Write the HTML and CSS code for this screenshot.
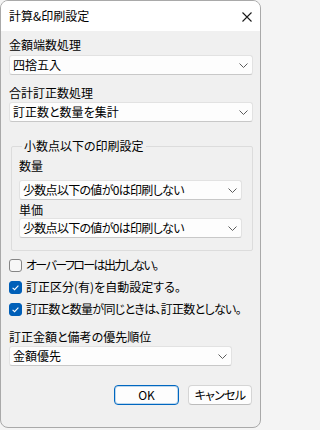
FILE: index.html
```html
<!DOCTYPE html>
<html lang="ja">
<head>
<meta charset="utf-8">
<title>計算&amp;印刷設定</title>
<link rel="stylesheet" href="styles.css">
</head>
<body>
<div class="dialog">
  <div class="titlebar">
    <span class="title">計算&amp;印刷設定</span>
    <svg class="close" width="10" height="10" viewBox="0 0 10 10"><path d="M0.5 0.5 L9.5 9.5 M9.5 0.5 L0.5 9.5" stroke="#1a1a1a" stroke-width="1.1" fill="none"/></svg>
  </div>
  <div class="content">
    <div class="label lab-first">金額端数処理</div>
    <div class="select sel-a">
      <span>四捨五入</span>
      <svg class="chev" width="9" height="5" viewBox="0 0 9 5"><path d="M0.5 0.5 L4.5 4.5 L8.5 0.5" stroke="#5c5c5c" stroke-width="1" fill="none"/></svg>
    </div>
    <div class="label lab-second">合計訂正数処理</div>
    <div class="select sel-b">
      <span>訂正数と数量を集計</span>
      <svg class="chev" width="9" height="5" viewBox="0 0 9 5"><path d="M0.5 0.5 L4.5 4.5 L8.5 0.5" stroke="#5c5c5c" stroke-width="1" fill="none"/></svg>
    </div>
    <fieldset class="group">
      <legend>小数点以下の印刷設定</legend>
      <div class="label lab-qty">数量</div>
      <div class="select sel-qty">
        <span class="narrow">少数点以下の値が0は印刷しない</span>
        <svg class="chev" width="9" height="5" viewBox="0 0 9 5"><path d="M0.5 0.5 L4.5 4.5 L8.5 0.5" stroke="#5c5c5c" stroke-width="1" fill="none"/></svg>
      </div>
      <div class="label lab-price">単価</div>
      <div class="select sel-price">
        <span class="narrow">少数点以下の値が0は印刷しない</span>
        <svg class="chev" width="9" height="5" viewBox="0 0 9 5"><path d="M0.5 0.5 L4.5 4.5 L8.5 0.5" stroke="#5c5c5c" stroke-width="1" fill="none"/></svg>
      </div>
    </fieldset>
    <div class="checks">
      <div class="check">
        <span class="box"></span>
        <span class="kana">オーバーフローは出力しない。</span>
      </div>
      <div class="check">
        <span class="box on"><svg width="13" height="13" viewBox="0 0 13 13"><path d="M3.6 6.8 L5.6 8.7 L9.4 4.6" stroke="#fff" stroke-width="1.1" fill="none"/></svg></span>
        <span>訂正区分(有)を自動設定する。</span>
      </div>
      <div class="check">
        <span class="box on"><svg width="13" height="13" viewBox="0 0 13 13"><path d="M3.6 6.8 L5.6 8.7 L9.4 4.6" stroke="#fff" stroke-width="1.1" fill="none"/></svg></span>
        <span class="tight">訂正数と数量が同じときは、訂正数としない。</span>
      </div>
    </div>
    <div class="label lab-third">訂正金額と備考の優先順位</div>
    <div class="select sel-c">
      <span>金額優先</span>
      <svg class="chev" width="9" height="5" viewBox="0 0 9 5"><path d="M0.5 0.5 L4.5 4.5 L8.5 0.5" stroke="#5c5c5c" stroke-width="1" fill="none"/></svg>
    </div>
    <div class="buttons">
      <div class="btn btn-ok">OK</div>
      <div class="btn btn-cancel"><span class="narrow">キャンセル</span></div>
    </div>
  </div>
</div>
</body>
</html>
```

FILE: styles.css
```css
html, body {
  margin: 0;
  padding: 0;
}
body {
  background: #f4f4f4;
  width: 262px;
  height: 430px;
  font-family: "Noto Sans CJK JP", "Noto Sans", sans-serif;
  font-size: 12px;
  line-height: 16px;
  color: #000;
  font-feature-settings: "palt";
}
.dialog {
  box-sizing: border-box;
  width: 261px;
  height: 428px;
  border: 1px solid #a9a9a9;
  border-radius: 8px;
  overflow: hidden;
  background: #f0f0f0;
  display: flex;
  flex-direction: column;
}
.titlebar {
  height: 30px;
  background: #ffffff;
  display: flex;
  align-items: center;
  justify-content: space-between;
  padding: 0 8px 0 8px;
  flex: none;
}
.title {
  color: #000;
}
.close {
  margin-right: 0;
  margin-top: 1px;
}
.content {
  display: flex;
  flex-direction: column;
  padding: 6px 7px 0 8px;
}
.label {
  height: 16px;
  white-space: nowrap;
}
.lab-second { margin-top: 10px; }
.lab-qty { margin-top: 0; }
.lab-price { margin-top: 2px; }
.lab-third { margin-top: 9px; }

.narrow { letter-spacing: -0.7px; }
.kana { letter-spacing: -1.6px; }
.tight { letter-spacing: -0.7px; }

.select {
  box-sizing: border-box;
  height: 20px;
  background: #fdfdfd;
  border: 1px solid #e2e2e2;
  border-bottom-color: #c8c8c8;
  border-radius: 3px;
  display: flex;
  align-items: center;
  justify-content: space-between;
  padding: 0 4px 0 3px;
  white-space: nowrap;
}
.select span {
  line-height: 16px;
}
.chev {
  flex: none;
  margin-top: 1px;
}
.sel-a { margin-top: 2px; }
.sel-b { margin-top: 1px; }
.sel-qty { margin-top: 6px; }
.sel-price { margin-top: 0; }
.sel-c { margin-top: 1px; width: 223px; }

.group {
  margin: 16px 0 0 2px;
  padding: 4px 10px 12px 7px;
  border: 1px solid #dcdcdc;
  border-radius: 2px;
  min-inline-size: 0;
  display: flex;
  flex-direction: column;
}
.group legend {
  padding: 0 2px;
  margin-left: 3px;
  line-height: 16px;
  height: 16px;
}

.checks {
  margin-top: 3px;
  display: flex;
  flex-direction: column;
}
.check {
  height: 22px;
  display: flex;
  align-items: center;
  gap: 4px;
  white-space: nowrap;
}
.box {
  box-sizing: border-box;
  width: 13px;
  height: 13px;
  border: 1px solid #858585;
  border-radius: 3px;
  background: #f7f7f7;
  flex: none;
  display: flex;
}
.box.on {
  background: #005fb8;
  border-color: #005fb8;
}
.box.on svg {
  margin: -1px;
}

.buttons {
  margin-top: 19px;
  display: flex;
  justify-content: flex-end;
  gap: 9px;
  padding-right: 1px;
}
.btn {
  box-sizing: border-box;
  height: 20px;
  border-radius: 4px;
  background: #fdfdfd;
  display: flex;
  align-items: center;
  justify-content: center;
  line-height: 16px;
}
.btn-ok {
  width: 65px;
  border: 1px solid #0067c0;
  box-shadow: inset 0 0 0 1px rgba(0, 103, 192, 0.25);
}
.btn-cancel {
  width: 64px;
  border: 1px solid #d5d5d5;
  border-bottom-color: #bcbcbc;
}
```
